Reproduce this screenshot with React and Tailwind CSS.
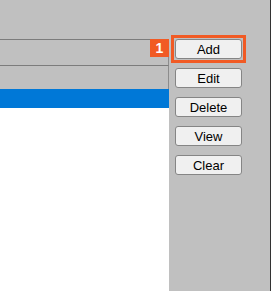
import React from "react";

const font = { fontFamily: '"Liberation Sans", Arial, sans-serif' };

function Btn({ label }) {
  return (
    <button className="h-[20px] w-[67px] bg-[#f0f0f0] border border-[#858585] rounded-[3px] text-[13px] leading-none text-black flex items-center justify-center">
      {label}
    </button>
  );
}

export default function App() {
  return (
    <div
      className="w-[271px] h-[291px] flex bg-[#c0c0c0] overflow-hidden"
      style={font}
    >
      {/* list side */}
      <div className="w-[169px] flex flex-col">
        <div className="h-[39px]" />
        <div className="h-[26px] border-t border-[#7c7c7c] border-r border-r-[#8c8c8c] bg-[#c0c0c0]" />
        <div className="h-[24px] border-t border-[#7c7c7c] border-r border-r-[#8c8c8c] bg-[#c0c0c0]" />
        <div className="h-[19px] bg-[#0078d7]" />
        <div className="flex-1 bg-white" />
      </div>

      {/* button panel */}
      <div className="flex-1 border-r border-[#333333] pl-[6px] pt-[39px]">
        <div className="flex flex-col gap-[9px]">
          <div className="relative w-[67px]">
            <div className="absolute -inset-[4px] border-[3px] border-[#f15a24]" />
            <div className="absolute left-[-25px] top-0 w-[19px] h-[18px] bg-[#f15a24] text-white text-[14px] font-bold flex items-center justify-center">
              1
            </div>
            <Btn label="Add" />
          </div>
          <Btn label="Edit" />
          <Btn label="Delete" />
          <Btn label="View" />
          <Btn label="Clear" />
        </div>
      </div>
    </div>
  );
}
